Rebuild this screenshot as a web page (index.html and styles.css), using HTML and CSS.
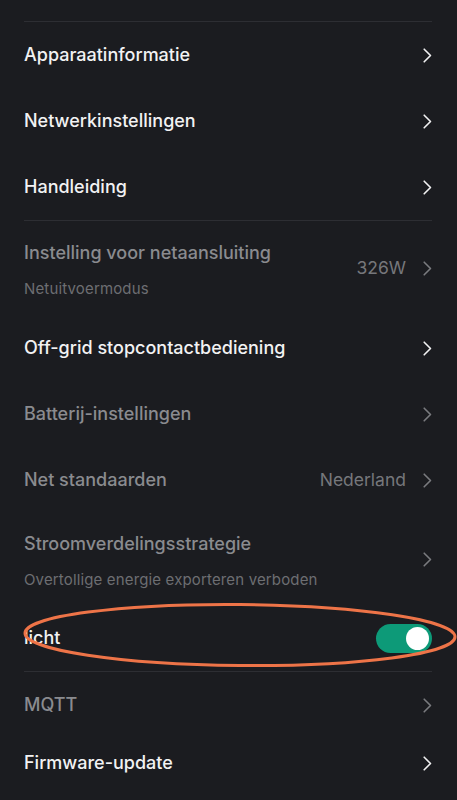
FILE: index.html
```html
<!DOCTYPE html>
<html lang="nl">
<head>
<meta charset="utf-8">
<link rel="stylesheet" href="styles.css">
</head>
<body>
<div class="screen">
  <div class="divider"></div>
  <div class="row"><span class="title">Apparaatinformatie</span><span class="end"><svg class="chev" viewBox="0 0 9 15"><path d="M1.2 1.2l6.3 6.3-6.3 6.3"/></svg></span></div>
  <div class="row"><span class="title">Netwerkinstellingen</span><span class="end"><svg class="chev" viewBox="0 0 9 15"><path d="M1.2 1.2l6.3 6.3-6.3 6.3"/></svg></span></div>
  <div class="row"><span class="title">Handleiding</span><span class="end"><svg class="chev" viewBox="0 0 9 15"><path d="M1.2 1.2l6.3 6.3-6.3 6.3"/></svg></span></div>
  <div class="divider"></div>
  <div class="row two dim"><span class="texts"><span class="title">Instelling voor netaansluiting</span><span class="sub">Netuitvoermodus</span></span><span class="end"><span class="value">326W</span><svg class="chev" viewBox="0 0 9 15"><path d="M1.2 1.2l6.3 6.3-6.3 6.3"/></svg></span></div>
  <div class="row"><span class="title">Off-grid stopcontactbediening</span><span class="end"><svg class="chev" viewBox="0 0 9 15"><path d="M1.2 1.2l6.3 6.3-6.3 6.3"/></svg></span></div>
  <div class="row dim"><span class="title">Batterij-instellingen</span><span class="end"><svg class="chev" viewBox="0 0 9 15"><path d="M1.2 1.2l6.3 6.3-6.3 6.3"/></svg></span></div>
  <div class="row dim"><span class="title">Net standaarden</span><span class="end"><span class="value">Nederland</span><svg class="chev" viewBox="0 0 9 15"><path d="M1.2 1.2l6.3 6.3-6.3 6.3"/></svg></span></div>
  <div class="row two dim short"><span class="texts"><span class="title">Stroomverdelingsstrategie</span><span class="sub">Overtollige energie exporteren verboden</span></span><span class="end"><svg class="chev" viewBox="0 0 9 15"><path d="M1.2 1.2l6.3 6.3-6.3 6.3"/></svg></span></div>
  <div class="row light-row"><span class="title">licht</span><span class="end"><span class="toggle"><span class="knob"></span></span></span>
    <svg class="ring" viewBox="0 0 440 66"><ellipse cx="216" cy="30" rx="215" ry="30.5" transform="rotate(0.5 216 30)"/></svg>
  </div>
  <div class="divider"></div>
  <div class="row dim"><span class="title">MQTT</span><span class="end"><svg class="chev" viewBox="0 0 9 15"><path d="M1.2 1.2l6.3 6.3-6.3 6.3"/></svg></span></div>
  <div class="row last"><span class="title">Firmware-update</span><span class="end"><svg class="chev" viewBox="0 0 9 15"><path d="M1.2 1.2l6.3 6.3-6.3 6.3"/></svg></span></div>
</div>
</body>
</html>
```
FILE: styles.css
```css
html, body {
  margin: 0;
  padding: 0;
  background: #1b1c20;
}
.screen {
  width: 457px;
  height: 800px;
  overflow: hidden;
  box-sizing: border-box;
  padding: 21px 25px 0 24px;
  font-family: Inter, "Noto Sans", sans-serif;
  color: #f2f2f3;
}
.divider {
  height: 1px;
  background: #2d2e33;
}
.row {
  position: relative;
  height: 66px;
  display: flex;
  align-items: center;
  justify-content: space-between;
}
.row.last {
  height: 50px;
}
.title {
  font-size: 18px;
  font-weight: 500;
  line-height: 22px;
  letter-spacing: 0;
  margin-top: -1px;
}
.row.two {
  height: 94px;
}
.row.two.short {
  height: 92px;
}
.texts {
  display: flex;
  flex-direction: column;
  gap: 15px;
  margin-top: 5px;
}
.texts .title {
  margin-top: 0;
}
.sub {
  font-size: 15px;
  font-weight: 400;
  line-height: 20px;
  letter-spacing: 0.15px;
  color: #6d6e72;
}
.end {
  display: flex;
  align-items: center;
  gap: 17px;
}
.value {
  font-size: 17.5px;
  color: #76777b;
  margin-top: -1px;
}
.chev {
  width: 9px;
  height: 15px;
  fill: none;
  stroke: #f2f2f3;
  stroke-width: 1.6;
  stroke-linecap: round;
  stroke-linejoin: round;
}
.dim .title {
  color: #8a8b8f;
}
.dim .chev {
  stroke: #7a7b7f;
}
.toggle {
  width: 56px;
  height: 29px;
  border-radius: 15px;
  background: #0d9a78;
  display: flex;
  align-items: center;
  justify-content: flex-end;
  padding-right: 3px;
  box-sizing: border-box;
}
.knob {
  width: 23px;
  height: 23px;
  border-radius: 50%;
  background: #ffffff;
}
.ring {
  position: absolute;
  left: 0;
  top: 0;
  width: 440px;
  height: 66px;
  overflow: visible;
  fill: none;
  stroke: #ee7448;
  stroke-width: 3;
  pointer-events: none;
}
```
